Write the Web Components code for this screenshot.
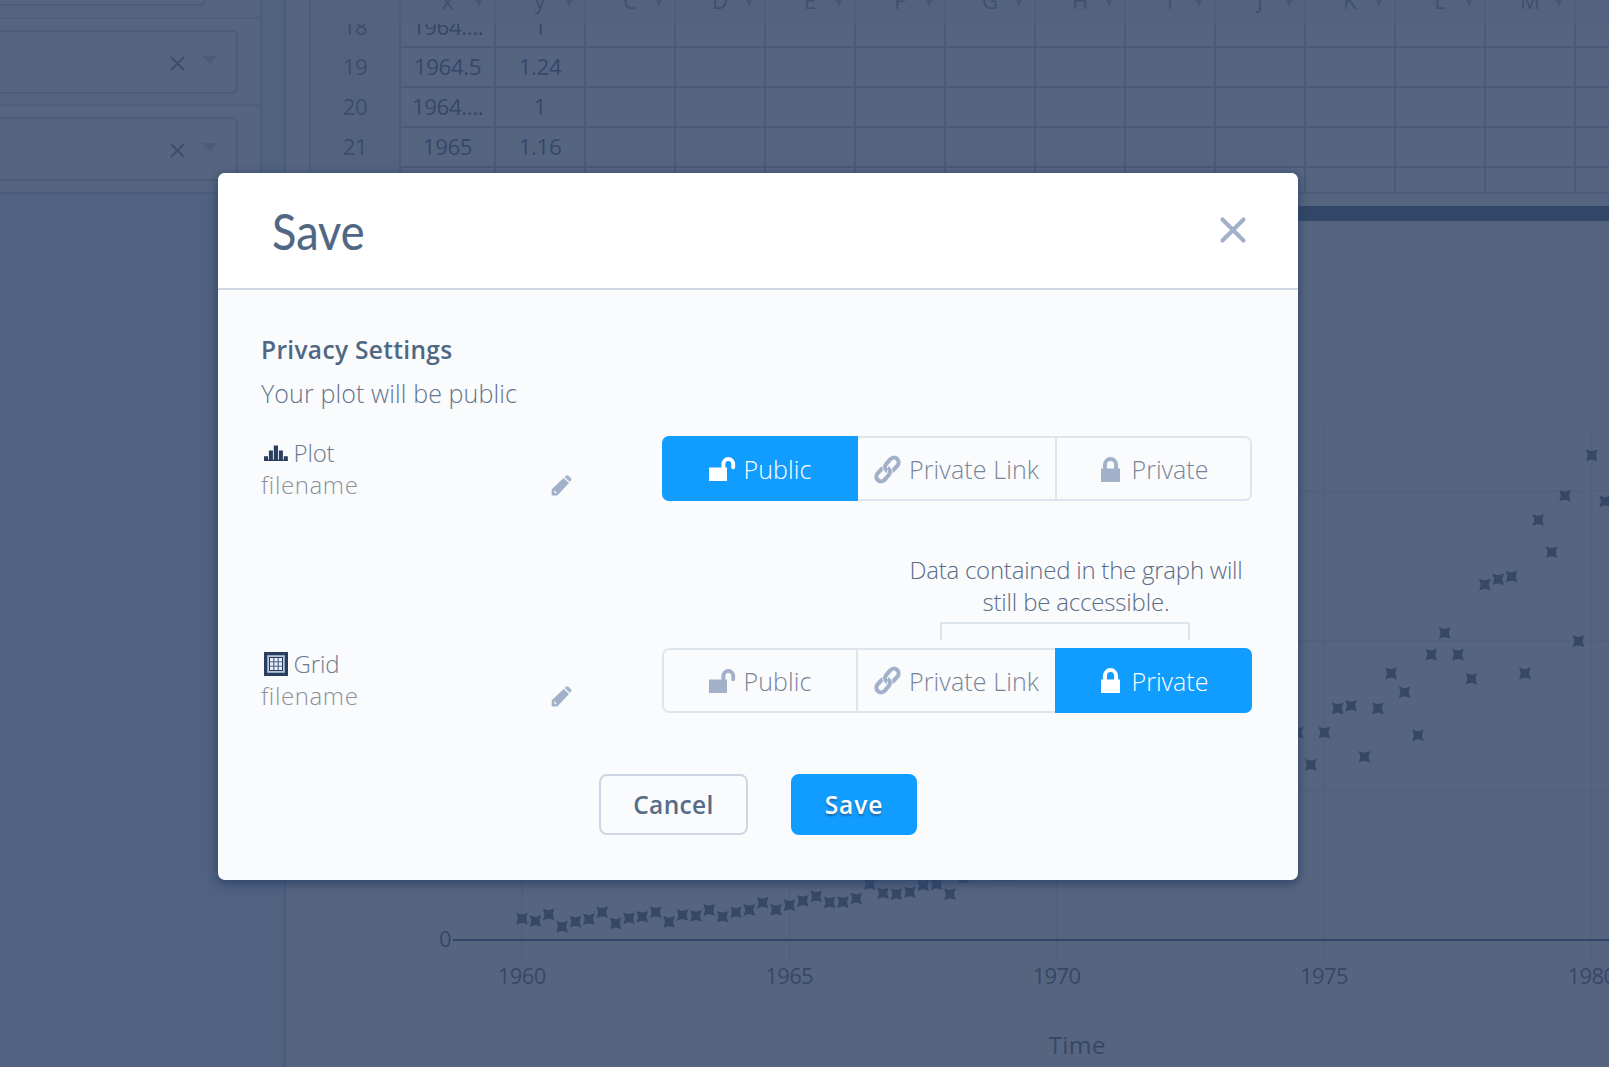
<!DOCTYPE html>
<html lang="en">
<head>
<meta charset="utf-8">
<title>Save plot</title>
<style>
html,body{margin:0;height:100%;overflow:hidden}
body{font-family:"Open Sans","Noto Sans",sans-serif;background:#56657f;color:#506784}
save-dialog{box-shadow:0 3px 10px 1px rgba(42,66,104,.85)}
</style>
</head>
<body>
<plot-workspace>
  <axis-sidebar slot="side"></axis-sidebar>
  <data-sheet slot="sheet"></data-sheet>
  <scatter-chart slot="chart"></scatter-chart>
</plot-workspace>
<save-dialog></save-dialog>
<script>
const define = (name, html, setup) => customElements.define(name, class extends HTMLElement {
  connectedCallback() {
    if (this.shadowRoot) return;
    const root = this.attachShadow({ mode: 'open' });
    root.innerHTML = typeof html === 'function' ? html(this) : html;
    if (setup) setup(this, root);
  }
});

// Single line of text tracked out or in to a given measure.
define('fit-text', '<style>:host{display:block;white-space:nowrap}span{display:inline-block}</style><span><slot></slot></span>', (el, root) => {
  const w = +el.getAttribute('w'), s = root.querySelector('span'), n = el.textContent.length;
  if (!w) return;
  s.style.letterSpacing = '0';
  s.style.letterSpacing = ((w - s.getBoundingClientRect().width) / n).toFixed(3) + 'px';
});

const ICONS = {
  unlock: [26, 24, '<path d="M0 10.5h18v13.5h-18z"/><path d="M14.4 11.5V7.2a4.9 5.2 0 0 1 9.8 0V10.2" fill="none" stroke="currentColor" stroke-width="3.9" stroke-linecap="round"/>'],
  lock: [19, 25, '<path d="M0 11.5h19V25H0z"/><path d="M3.9 13V8a5.6 5.9 0 0 1 11.2 0v5" fill="none" stroke="currentColor" stroke-width="4"/>'],
  link: [25, 25, '<g transform="rotate(-48 12.5 12.5)" fill="none" stroke="currentColor" stroke-width="4.1"><rect x="-1.8" y="7.8" width="15.6" height="9.4" rx="4.7"/><path d="M20 7.8H15.9a4.7 4.7 0 0 0-4.7 4.7" stroke="#f9fbfd" stroke-width="5.8"/><rect x="11.2" y="7.8" width="15.6" height="9.4" rx="4.7"/><path d="M13.8 12.3a4.7 4.7 0 0 1-4.7 4.9H5" stroke="#f9fbfd" stroke-width="5.6"/><path d="M13.8 12a4.7 4.7 0 0 1-4.7 5.2H4"/></g>'],
  pencil: [21, 21, '<path d="M.8 14.2 12.6 2.9 18 8 6.3 20.4H1.6Q.6 20.4.6 19.4z"/><path d="M13.6 2 15.2.6Q16.3-.3 17.5.8L20 3.3q1 1.1 0 2.3L18.8 7z" opacity=".95"/><path d="M3.2 15.2l2.6 2.6-1.2.6-1.6-1.6z" fill="#f9fbfd"/>'],
  plot: [24, 16, '<path d="M0 11.3h4v4.7H0zM4.9 5.6h4V16h-4zM9.8.5h4.2V16H9.8zM14.9 5.6h4V16h-4zM19.8 11.3h4V16h-4z"/><path d="M0 14.6h24V16H0z"/>'],
  grid: [24, 24, '<path d="M0 0h24v24H0z"/><path d="M3.2 3.2h17.6v17.6H3.2z" fill="#b4c4db"/><path d="M5 5h14v14H5z"/><path d="M6 6h3.4v3.4H6zM10.3 6h3.4v3.4h-3.4zM14.6 6H18v3.4h-3.4zM6 10.3h3.4v3.4H6zM10.3 10.3h3.4v3.4h-3.4zM14.6 10.3H18v3.4h-3.4zM6 14.6h3.4V18H6zM10.3 14.6h3.4V18h-3.4zM14.6 14.6H18V18h-3.4z" fill="#e4ecf7"/>'],
  close: [26, 26, '<path d="M2.5 2.5l21 21M23.5 2.5l-21 21" stroke="currentColor" stroke-width="4.2" stroke-linecap="round"/>'],
  clear: [15, 15, '<path d="M1 1l13 13M14 1L1 14" stroke="currentColor" stroke-width="2"/>'],
  caret: [16, 8, '<path d="M0 0h16L8 8z"/>']
};
define('ui-icon', el => {
  const [w, h, body] = ICONS[el.getAttribute('name')];
  return `<style>:host{display:block;flex:none;width:${w}px;height:${h}px}svg{display:block;overflow:visible}</style><svg width="${w}" height="${h}" viewBox="0 0 ${w} ${h}" fill="currentColor">${body}</svg>`;
});

define('plot-workspace', `<style>
:host{display:flex;width:1609px;height:1067px;overflow:hidden}
.main{flex:1;display:flex;flex-direction:column;min-width:0}
.bar{height:15px;background:#324767;flex:none}
</style><slot name="side"></slot><div class="main"><slot name="sheet"></slot><div class="bar"></div><slot name="chart"></slot></div>`);

define('select-box', `<style>
:host{display:flex;align-items:center;justify-content:flex-end;box-sizing:border-box;height:64px;width:250px;margin-left:-12px;border:2px solid #4c5c79;border-radius:6px;padding:3px 18px 0 0;gap:17.5px;background:#56657f}
.x{color:#3d4d6c}.c{color:#4b5b78;margin-top:-7px}
</style><ui-icon class="x" name="clear"></ui-icon><ui-icon class="c" name="caret"></ui-icon>`);

define('axis-sidebar', `<style>
:host{display:flex;flex-direction:column;width:286px;flex:none;box-sizing:border-box;border-right:2px solid #4b5c7b;background:#50627f}
.panel{width:262px;height:194px;box-sizing:border-box;border-right:2px solid #4a5b7a;border-bottom:2px solid #4b5c7b;background:#56657f;overflow:hidden}
.stub{height:6px;width:206px;box-sizing:border-box;border:2px solid #4c5c79;border-width:0 2px 2px 0;border-radius:0 0 6px 0}
.row{display:flex;align-items:center;box-sizing:border-box;height:87px;border-top:2px solid #4e5e7b}
.pad{height:11px}
</style><div class="panel"><div class="stub"></div><div class="pad"></div><div class="row"><select-box></select-box></div><div class="row"><select-box></select-box></div></div>`);

define('data-sheet', () => {
  const cols = ['x', 'y', ...'CDEFGHIJKLM'];
  const rows = [['18', '1964....', '1'], ['19', '1964.5', '1.24'], ['20', '1964....', '1'], ['21', '1965', '1.16'], []];
  const row = r => `<div class="r">${Array.from({ length: 15 }, (_, i) => `<div>${r[i] || ''}</div>`).join('')}</div>`;
  return `<style>
:host{display:block;height:206px;box-sizing:border-box;padding-left:23px;flex:none;overflow:hidden}
.sheet{height:193.5px;box-sizing:border-box;border-left:2px solid #4d5d7a;border-bottom:2px solid #4b5c7b;overflow:hidden}
.head,.r{display:grid;grid-template-columns:90px 95px repeat(13,90px);width:1355px}
.head{height:24px;background:#53637f;overflow:hidden}
.head div{box-sizing:border-box;border-right:2px solid #4e5e7b;height:24px;display:grid;grid-template-columns:1fr auto 1fr;align-items:center;line-height:22px;font-size:22px;color:#3f506f}
.head b{font-weight:400;grid-column:2;margin-top:-25px}
.head i{width:0;height:0;border:4px solid transparent;border-top:8px solid #475877;border-bottom:0;justify-self:end;margin:-19px 11px 0 0}
.body{height:168px;overflow:hidden}
.rows{margin-top:-16px}
.r div{box-sizing:border-box;height:40px;padding-top:6px;border-right:2px solid #4a5a78;border-bottom:2px solid #4a5a78;text-align:center;line-height:26px;font-size:22.3px;color:#35476a;letter-spacing:-.4px}
.r div:first-child{border-bottom-color:transparent;background:#53637f;color:#3c4d6c}
</style><div class="sheet"><div class="head"><div></div>${cols.map(c => `<div><b>${c}</b><i></i></div>`).join('')}</div><div class="body"><div class="rows">${rows.map(row).join('')}</div></div></div>`;
});

define('scatter-chart', () => {
  const v = [.71,.63,.85,.44,.61,.69,.92,.55,.72,.77,.92,.6,.83,.8,1,.77,.92,1,1.24,1,1.16,1.3,1.45,1.25,1.26,1.38,1.86,1.56,1.53,1.59,1.83,1.86,1.53,2.07,2.34,2.25,2.16,2.43,2.7,2.25,2.79,3.42,3.69,3.6,3.6,4.32,4.32,4.05,4.86,5.04,5.04,4.41,5.58,5.85,6.57,5.31,6.03,6.39,6.93,5.85,6.93,7.74,7.83,6.12,7.74,8.91,8.28,6.84,9.54,10.26,9.54,8.73,11.88,12.06,12.15,8.91,14.04,12.96,14.85,9.99,16.2,14.67];
  const X = i => 236 + i * 13.372, Y = n => 718.8 - n * 29.9;
  const star = 'l4.6 1.5h2.4l4.6-1.5-1.5 4.6v2.4l1.5 4.6-4.6-1.5h-2.4l-4.6 1.5 1.5-4.6v-2.4z';
  let s = '';
  [0, 20, 40, 60, 80].forEach((q, k) => {
    s += `<path d="M${X(q)} 206V740" stroke="#50607d" stroke-width="1.6"/><text x="${X(q)}" y="763" textLength="48.5" text-anchor="middle">${1960 + k * 5}</text>`;
  });
  [5, 10, 15].forEach(n => s += `<path d="M167 ${Y(n)}H1323" stroke="#50607d" stroke-width="1.6"/>`);
  s += '<path d="M167 719H1323" stroke="#33446a" stroke-width="2"/>';
  v.forEach((n, i) => s += `<path d="M${(X(i) - 5.8).toFixed(1)} ${(Y(n) - 5.8).toFixed(1)}${star}" fill="#364866"/>`);
  return `<style>:host{display:block;flex:1;background:#56657f}svg{display:block;font-size:22px;fill:#364766}</style>
<svg width="1323" height="846">${s}<text x="153" y="726">0</text><text x="791" y="833" text-anchor="middle" font-size="24.5" textLength="57">Time</text></svg>`;
});

define('privacy-toggle', el => {
  const on = +el.getAttribute('active');
  const o = [['unlock', 'Public', 68, 9], ['link', 'Private Link', 130, 9], ['lock', 'Private', 77, 12]];
  return `<style>
:host{display:grid;grid-template-columns:196px 199px 195px;width:590px;height:65px;flex:none}
div{display:flex;align-items:center;justify-content:center;box-sizing:border-box;border:2px solid #dfe5ef;border-left-width:0;color:#a2b1c9}
.o0{border-left-width:2px;border-radius:7px 0 0 7px}
.o1{padding-left:1px}
.o2{border-radius:0 7px 7px 0;padding-left:2px}
.o2.on{margin-left:-2px;padding-left:4px}
fit-text{font-size:25px;font-weight:300;line-height:32px;color:#7a8499;margin-top:1px}
ui-icon{margin-top:1px}
.on{background:#119dff;border-color:#119dff;color:#fff}.on fit-text{color:#fff}
</style>${o.map((x, i) => `<div class="o${i}${i === on ? ' on' : ''}" style="gap:${x[3]}px"><ui-icon name="${x[0]}"></ui-icon><fit-text w="${x[2]}">${x[1]}</fit-text></div>`).join('')}`;
});

define('file-row', el => `<style>
:host{display:flex;height:65px;width:991px}
.info{width:289.5px;padding-top:.8px;font-size:24px;line-height:32px;font-weight:300}
.kind{display:flex;align-items:center;padding-left:3px;gap:5.5px;color:#2a3f5f;height:32px}
.kind fit-text{color:#6b7a92}
.name{color:#8b8f98}
.edit{width:111.5px;padding-top:38.8px;color:#a2b1c9}
</style><div class="info"><div class="kind"><ui-icon name="${el.getAttribute('icon')}"></ui-icon><fit-text w="${el.getAttribute('w')}">${el.getAttribute('kind')}</fit-text></div><fit-text class="name" w="97.5">filename</fit-text></div><div class="edit"><ui-icon name="pencil"></ui-icon></div><slot></slot>`);

define('ui-button', `<style>
:host{display:flex;align-items:center;justify-content:center;box-sizing:border-box;height:61.5px;width:149px;padding-top:1.4px;border:2px solid #cfd5e4;border-radius:8px;color:#586b89;font-size:24.5px;font-weight:600;line-height:32px}
:host([primary]){width:126px;padding-left:1px;background:#119dff;border-color:#119dff;color:#fff;text-shadow:0 2px 2px rgba(42,63,95,.55)}
</style><slot></slot>`);

define('save-dialog', `<style>
:host{position:absolute;left:218px;top:172.5px;display:flex;flex-direction:column;width:1080px;height:707px;box-sizing:border-box;background:#f9fbfd;border-radius:7px;overflow:hidden}
header{display:flex;align-items:center;justify-content:space-between;height:115px;flex:none;background:#fff;border-bottom:2px solid #cfd7e3;padding:0 52px 0 53px}
header ui-icon{color:#a2b1c9}
header svg{display:block;overflow:visible;font-family:Lato,sans-serif;font-size:50px;fill:#506784;stroke:#506784;stroke-width:.2px}
main{padding:44.5px 0 0 43px;display:flex;flex-direction:column}
h2{font-size:24.5px;line-height:32px;font-weight:600;margin:0;color:#506784}
p{font-size:25px;line-height:32px;font-weight:300;margin:11px 0 27.2px;color:#65748f}
.note{display:flex;flex-direction:column;align-items:center;align-self:flex-end;width:372px;margin:52.8px 36px 0 0;font-size:24px;line-height:32px;font-weight:300;color:#5c6b86}
.brace{width:250px;height:18px;box-sizing:border-box;border:2px solid #dfe5ec;border-bottom:0;margin:3.7px 22px 8px 0}
footer{display:flex;gap:42.5px;padding:61px 0 0 338px}
</style>
<header><svg width="92" height="40"><text x="1" y="40" textLength="92.5" lengthAdjust="spacingAndGlyphs">Save</text></svg><ui-icon name="close"></ui-icon></header>
<main><h2><fit-text w="191.5">Privacy Settings</fit-text></h2><p><fit-text w="256">Your plot will be public</fit-text></p>
<file-row icon="plot" kind="Plot" w="41"><privacy-toggle active="0"></privacy-toggle></file-row>
<div class="note"><fit-text w="333">Data contained in the graph will</fit-text><fit-text w="187">still be accessible.</fit-text><div class="brace"></div></div>
<file-row icon="grid" kind="Grid" w="46"><privacy-toggle active="2"></privacy-toggle></file-row>
<footer><ui-button><fit-text w="80.5">Cancel</fit-text></ui-button><ui-button primary><fit-text w="58.5">Save</fit-text></ui-button></footer></main>`);
</script>
</body>
</html>
